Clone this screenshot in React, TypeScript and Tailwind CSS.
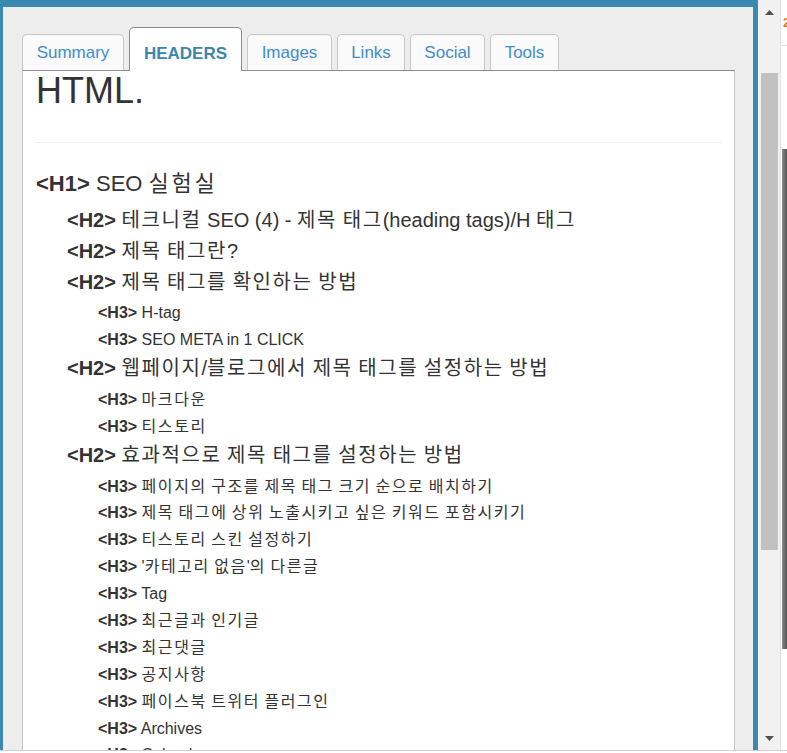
import React from "react";

const groups: { level: 1 | 2 | "g"; text?: string; items?: string[] }[] = [
  { level: 1, text: "SEO 실험실" },
  { level: 2, text: "테크니컬 SEO (4) - 제목 태그(heading tags)/H 태그" },
  { level: 2, text: "제목 태그란?" },
  { level: 2, text: "제목 태그를 확인하는 방법" },
  { level: "g", items: ["H-tag", "SEO META in 1 CLICK"] },
  { level: 2, text: "웹페이지/블로그에서 제목 태그를 설정하는 방법" },
  { level: "g", items: ["마크다운", "티스토리"] },
  { level: 2, text: "효과적으로 제목 태그를 설정하는 방법" },
  {
    level: "g",
    items: [
      "페이지의 구조를 제목 태그 크기 순으로 배치하기",
      "제목 태그에 상위 노출시키고 싶은 키워드 포함시키기",
      "티스토리 스킨 설정하기",
      "'카테고리 없음'의 다른글",
      "Tag",
      "최근글과 인기글",
      "최근댓글",
      "공지사항",
      "페이스북 트위터 플러그인",
      "Archives",
      "Calendar",
    ],
  },
];

const tabs = [
  { label: "Summary", w: "w-[102px]" },
  { label: "HEADERS", w: "w-[113px]", active: true },
  { label: "Images", w: "w-[85px]" },
  { label: "Links", w: "w-[68px]" },
  { label: "Social", w: "w-[75px]" },
  { label: "Tools", w: "w-[69px]" },
];

// Wrap Korean runs so their spacing matches the wider hangul of the reference
function Kr({ text, track }: { text: string; track: string }) {
  const parts = text.split(/([\uAC00-\uD7A3]+)/);
  return (
    <>
      {parts.map((p, i) =>
        /[\uAC00-\uD7A3]/.test(p) ? (
          <span key={i} className={track}>
            {p}
          </span>
        ) : (
          <React.Fragment key={i}>{p}</React.Fragment>
        )
      )}
    </>
  );
}

function H3Row({ text }: { text: string }) {
  return (
    <div className="h-[26.9px] flex items-center pl-[62px] text-[16px] leading-none whitespace-nowrap">
      <span>
        <b className="font-bold">&lt;H3&gt;</b> <Kr text={text} track="tracking-[1.55px]" />
      </span>
    </div>
  );
}

export default function App() {
  return (
    <div className="w-[787px] h-[753px] flex flex-col bg-white overflow-hidden font-['Liberation_Sans','Noto_Sans_CJK_KR',sans-serif] text-[#333333]">
      <div className="flex h-[750px]">
        {/* Modal frame */}
        <div className="w-[758px] h-full flex flex-col border-t-[7px] border-l-[3px] border-r-[5px] border-b-0 border-[#3a89b1] bg-[#ededed] pl-[19px] pr-[18px] pt-[20px]">
          {/* Tabs */}
          <div className="flex items-end gap-[5px] h-[43px] shrink-0">
            {tabs.map((t) =>
              t.active ? (
                <div
                  key={t.label}
                  className={`${t.w} relative z-10 h-[44px] -mb-px flex items-center justify-center pt-[7px] bg-white border border-b-0 border-[#8c8c8c] rounded-t-[5px] text-[17px] leading-none font-bold text-[#3a87ad]`}
                >
                  {t.label}
                </div>
              ) : (
                <div
                  key={t.label}
                  className={`${t.w} h-[36px] flex items-center justify-center pb-[1px] bg-[#fafafa] border border-b-0 border-[#c8c8c8] rounded-t-[5px] text-[17px] leading-none text-[#428bca]`}
                >
                  {t.label}
                </div>
              )
            )}
          </div>
          {/* Panel */}
          <div className="flex-1 min-h-0 bg-white border-t border-t-[#8c8c8c] border-l border-r border-l-[#c6c6c6] border-r-[#c6c6c6] px-[13px] overflow-hidden">
            <div className="text-[36px] leading-[40px] h-[40px] whitespace-nowrap">HTML.</div>
            <div className="mt-[31px] h-px bg-[#eeeeee]" />
            <div className="mt-[21px]">
              {groups.map((g, i) => {
                if (g.level === 1) {
                  return (
                    <div key={i} className="h-[41px] pb-[2px] flex items-center text-[22px] leading-none whitespace-nowrap">
                      <span>
                        <b className="font-bold">&lt;H1&gt;</b> <Kr text={g.text!} track="tracking-[2.8px]" />
                      </span>
                    </div>
                  );
                }
                if (g.level === 2) {
                  return (
                    <div key={i} className="h-[31px] pb-[2px] flex items-center pl-[31px] text-[20px] leading-none whitespace-nowrap">
                      <span>
                        <b className="font-bold">&lt;H2&gt;</b> <Kr text={g.text!} track="tracking-[1.6px]" />
                      </span>
                    </div>
                  );
                }
                return (
                  <div key={i} className="pt-[1.5px] pb-[0.5px]">
                    {g.items!.map((t) => (
                      <H3Row key={t} text={t} />
                    ))}
                  </div>
                );
              })}
            </div>
          </div>
        </div>

        {/* Scrollbar */}
        <div className="w-[22px] h-full bg-[#f1f1f1] flex flex-col">
          <div className="h-[17px] flex items-end justify-center pb-[2px] shrink-0">
            <svg width="9" height="5" viewBox="0 0 9 5">
              <polygon points="4.5,0 9,5 0,5" fill="#505050" />
            </svg>
          </div>
          <div className="flex-1 min-h-0 pt-[56px] pl-[3px] pr-[2px]">
            <div className="h-[477px] bg-[#c1c1c1]" />
          </div>
          <div className="h-[17px] flex items-start justify-center pt-[3px] shrink-0">
            <svg width="9" height="5" viewBox="0 0 9 5">
              <polygon points="0,0 9,0 4.5,5" fill="#505050" />
            </svg>
          </div>
        </div>

        {/* Underlying page strip */}
        <div className="flex-1 h-full border-l border-[#e2e2e2] bg-white flex flex-col overflow-hidden">
          <div className="h-[46px] border-b border-[#dddddd] flex items-start pt-[16px] pl-[2px] shrink-0">
            <span className="text-[13px] leading-none text-[#d77a2a] font-bold">2</span>
          </div>
          <div className="mt-[103px] h-[500px] ml-[1px] bg-gradient-to-r from-[#8a8a8a] to-[#555555]" />
        </div>
      </div>
      <div className="h-[3px] border-t border-[#cfcfcf] bg-white" />
    </div>
  );
}
